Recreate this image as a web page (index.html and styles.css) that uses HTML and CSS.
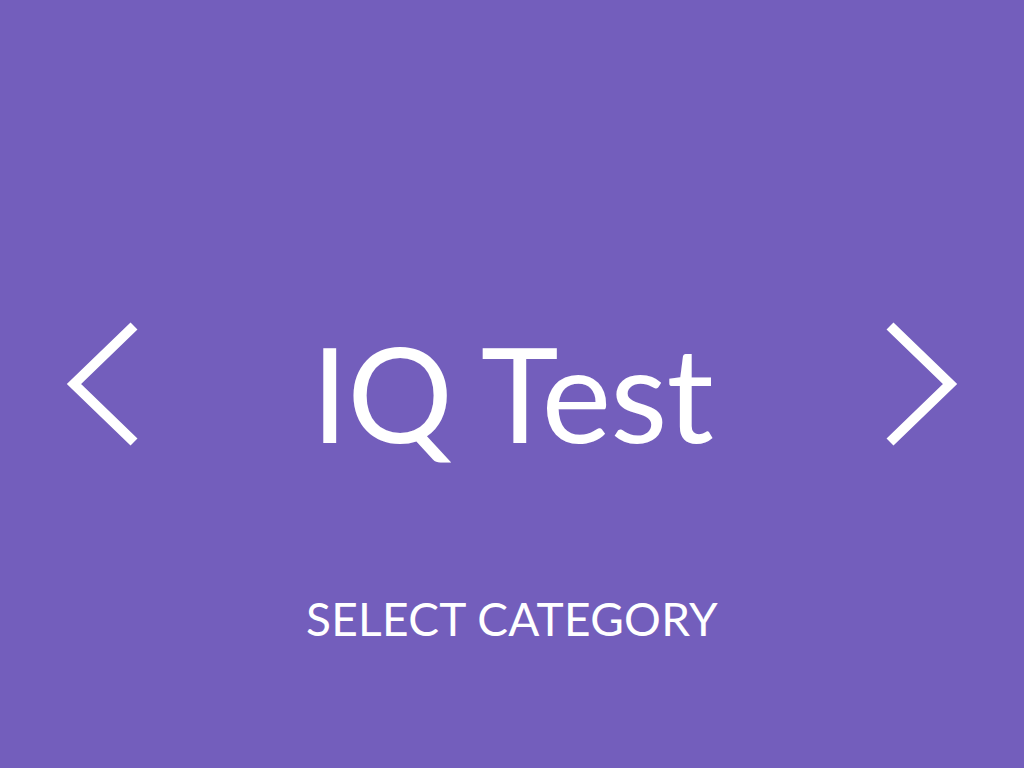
FILE: index.html
```html
<!DOCTYPE html>
<html>
<head>
<meta charset="utf-8">
<link rel="stylesheet" href="styles.css">
</head>
<body>
<main class="stage">
  <div class="row">
    <button class="nav" aria-label="Previous">
      <svg width="72" height="124" viewBox="0 0 72 124"><polyline points="68,4 8,62 68,120" fill="none" stroke="#fff" stroke-width="10"/></svg>
    </button>
    <h1 class="title">IQ Test</h1>
    <button class="nav" aria-label="Next">
      <svg width="72" height="124" viewBox="0 0 72 124"><polyline points="4,4 64,62 4,120" fill="none" stroke="#fff" stroke-width="10"/></svg>
    </button>
  </div>
  <div class="subtitle">SELECT CATEGORY</div>
</main>
</body>
</html>
```
FILE: styles.css
```css
html, body {
  margin: 0;
  padding: 0;
  height: 100%;
}
body {
  background: #735ebc;
  font-family: "Lato", "Noto Sans", sans-serif;
  color: #fff;
}
.stage {
  height: 768px;
  display: flex;
  flex-direction: column;
  align-items: center;
  padding-top: 322px;
  box-sizing: border-box;
}
.row {
  width: 100%;
  box-sizing: border-box;
  padding: 0 66px 0 66px;
  display: flex;
  align-items: center;
  justify-content: space-between;
  height: 124px;
}
.nav {
  background: none;
  border: 0;
  padding: 0;
  margin: 0;
  width: 72px;
  height: 124px;
  display: flex;
}
.title {
  margin: 0;
  font-weight: 400;
  font-size: 132px;
  line-height: 124px;
  letter-spacing: -1px;
  position: relative;
  top: 8px;
}
.subtitle {
  margin-top: 148px;
  font-size: 46px;
  line-height: 50px;
  letter-spacing: 0.3px;
}
```
